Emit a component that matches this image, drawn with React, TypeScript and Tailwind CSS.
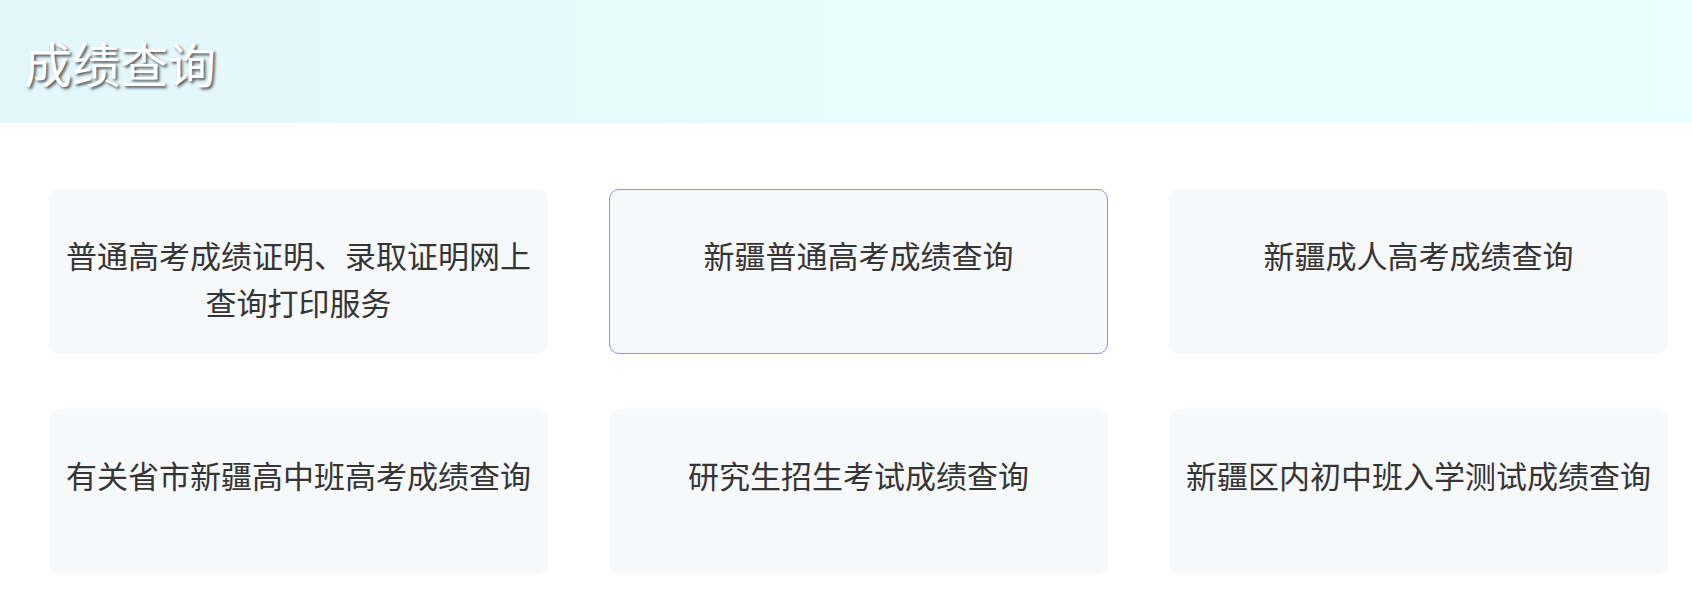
const items = [
  "普通高考成绩证明、录取证明网上查询打印服务",
  "新疆普通高考成绩查询",
  "新疆成人高考成绩查询",
  "有关省市新疆高中班高考成绩查询",
  "研究生招生考试成绩查询",
  "新疆区内初中班入学测试成绩查询",
];

export default function App() {
  return (
    <div className="min-h-screen bg-white font-['Noto_Sans_CJK_SC','Noto_Sans',sans-serif]">
      <header className="flex h-[123px] items-center bg-gradient-to-r from-[#e3f6fa] via-[#e8fcfd] to-[#ebffff] pl-[24px]">
        <h1 className="text-[48px] leading-none text-white [text-shadow:2px_2px_3px_rgba(0,0,0,0.65)]">
          成绩查询
        </h1>
      </header>

      <div className="grid grid-cols-[repeat(3,499px)] gap-x-[61px] gap-y-[55px] pl-[49px] pt-[66px]">
        {items.map((t, i) => (
          <a
            key={t}
            href="#"
            className={
              i === 1
                ? "h-[165px] rounded-[10px] border border-[#9a8cf2] bg-[#f7f8fa] px-[16px] pt-[41px] text-center text-[31px] leading-[47px] text-[#353535]"
                : "h-[165px] rounded-[10px] border border-transparent bg-[#f7f8fa] px-[16px] pt-[41px] text-center text-[31px] leading-[47px] text-[#353535]"
            }
          >
            {t}
          </a>
        ))}
      </div>
    </div>
  );
}
